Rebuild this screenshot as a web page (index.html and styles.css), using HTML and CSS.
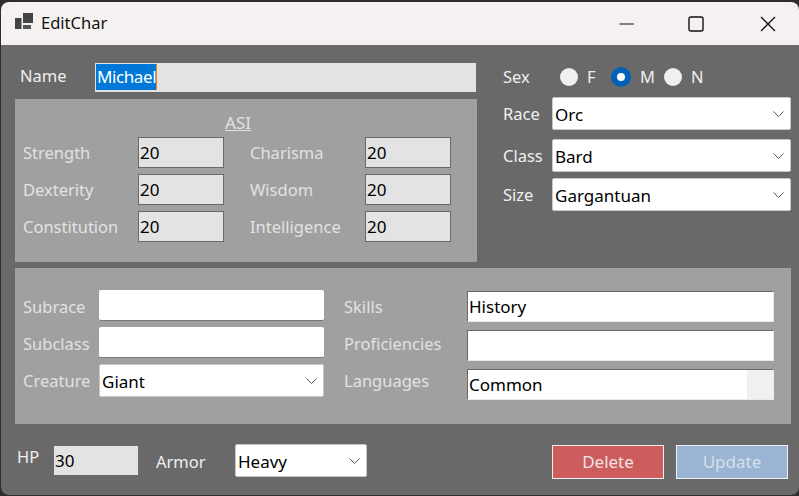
FILE: index.html
```html
<!DOCTYPE html>
<html lang="en">
<head>
    <meta charset="UTF-8">
    <meta name="viewport" content="width=device-width, initial-scale=1.0">
    <title>EditChar</title>
    <link rel="stylesheet" href="styles.css">
</head>
<body>
    <div class="window">
        <!-- Title bar -->
        <div class="titlebar">
            <svg class="app-icon" width="18" height="17" viewBox="0 0 18 17">
                <rect x="0" y="5" width="6.5" height="11" fill="#444"/>
                <rect x="8" y="0" width="10" height="10" fill="#444"/>
                <rect x="8" y="12" width="8" height="4" fill="#555"/>
            </svg>
            <span class="title">EditChar</span>
            <div class="caption-buttons">
                <svg width="16" height="16" viewBox="0 0 16 16"><path d="M1.5 8H16" stroke="#111" stroke-width="1.2"/></svg>
                <svg class="max-button" width="16" height="16" viewBox="0 0 16 16"><rect x="1" y="1" width="14" height="14" rx="2" fill="none" stroke="#111" stroke-width="1.4"/></svg>
                <svg width="16" height="16" viewBox="0 0 16 16"><path d="M1 1L15 15M15 1L1 15" stroke="#111" stroke-width="1.3"/></svg>
            </div>
        </div>

        <div class="client">
            <div class="top">
                <div class="left">
                    <div class="name-row">
                        <label class="name-label">Name</label>
                        <div class="name-field"><span class="selected">Michael</span></div>
                    </div>
                    <div class="panel asi">
                        <div class="asi-title">ASI</div>
                        <div class="asi-grid">
                            <label>Strength</label><input class="stat" type="text" value="20">
                            <label>Charisma</label><input class="stat" type="text" value="20">
                            <label>Dexterity</label><input class="stat" type="text" value="20">
                            <label>Wisdom</label><input class="stat" type="text" value="20">
                            <label>Constitution</label><input class="stat" type="text" value="20">
                            <label>Intelligence</label><input class="stat" type="text" value="20">
                        </div>
                    </div>
                </div>

                <div class="right">
                    <div class="sex-row">
                        <label class="sex-label">Sex</label>
                        <span class="radio"></span><label class="radio-text">F</label>
                        <span class="radio checked"></span><label class="radio-text">M</label>
                        <span class="radio"></span><label class="radio-text">N</label>
                    </div>
                    <div class="form-row race-row">
                        <label>Race</label>
                        <div class="combo"><span>Orc</span><svg width="11" height="6" viewBox="0 0 11 6"><path d="M0.5 0.5L5.5 5.5L10.5 0.5" fill="none" stroke="#555"/></svg></div>
                    </div>
                    <div class="form-row class-row">
                        <label>Class</label>
                        <div class="combo"><span>Bard</span><svg width="11" height="6" viewBox="0 0 11 6"><path d="M0.5 0.5L5.5 5.5L10.5 0.5" fill="none" stroke="#555"/></svg></div>
                    </div>
                    <div class="form-row">
                        <label>Size</label>
                        <div class="combo"><span>Gargantuan</span><svg width="11" height="6" viewBox="0 0 11 6"><path d="M0.5 0.5L5.5 5.5L10.5 0.5" fill="none" stroke="#555"/></svg></div>
                    </div>
                </div>
            </div>

            <div class="panel details">
                <div class="details-left">
                    <div class="detail-row"><label>Subrace</label><input class="plain" type="text"></div>
                    <div class="detail-row"><label>Subclass</label><input class="plain" type="text"></div>
                    <div class="detail-row">
                        <label>Creature</label>
                        <div class="combo"><span>Giant</span><svg width="11" height="6" viewBox="0 0 11 6"><path d="M0.5 0.5L5.5 5.5L10.5 0.5" fill="none" stroke="#555"/></svg></div>
                    </div>
                </div>
                <div class="details-right">
                    <div class="list-row"><label>Skills</label><div class="listbox">History</div></div>
                    <div class="list-row"><label>Proficiencies</label><div class="listbox"></div></div>
                    <div class="list-row"><label>Languages</label><div class="listbox"><span>Common</span><span class="scroll-strip"></span></div></div>
                </div>
            </div>

            <div class="bottom">
                <label class="hp-label">HP</label>
                <input class="hp" type="text" value="30">
                <label class="armor-label">Armor</label>
                <div class="combo armor"><span>Heavy</span><svg width="11" height="6" viewBox="0 0 11 6"><path d="M0.5 0.5L5.5 5.5L10.5 0.5" fill="none" stroke="#555"/></svg></div>
                <button class="btn delete">Delete</button>
                <button class="btn update">Update</button>
            </div>
        </div>
    </div>
</body>
</html>
```

FILE: styles.css
```css
* {
    box-sizing: border-box;
}
html, body {
    margin: 0;
    height: 100%;
    overflow: hidden;
}
body {
    background-color: #2e2e2e;
    font-family: "Noto Sans", "Open Sans", sans-serif;
    font-size: 17px;
    color: #000;
}
label {
    color: #efefef;
    font-size: 16.5px;
    line-height: 22px;
}
input {
    font-family: inherit;
    font-size: 17px;
    outline: none;
}
.window {
    width: 798px;
    height: 493px;
    margin: 2px 0 0 1px;
    border-radius: 8px;
    overflow: hidden;
    display: flex;
    flex-direction: column;
}
.titlebar {
    height: 43px;
    background-color: #f5f1f0;
    display: flex;
    align-items: center;
    padding-left: 14px;
}
.app-icon {
    margin-right: 8px;
    margin-top: -4px;
}
.title {
    font-size: 16.5px;
    color: #111;
    margin-top: -2px;
}
.caption-buttons {
    margin-left: auto;
    display: flex;
    gap: 55px;
    padding-right: 23px;
}
.max-button {
    margin-left: -1px;
    margin-right: 1px;
}
.client {
    flex: 1;
    background-color: #696969;
}
.top {
    display: flex;
    height: 223px;
    padding-left: 14px;
}
.left {
    width: 462px;
    padding-top: 18px;
}
.name-row {
    display: flex;
    align-items: center;
    height: 29px;
}
.name-label {
    width: 80px;
    padding-left: 5px;
    margin-top: -3px;
}
.name-field {
    flex: 1;
    height: 29px;
    background-color: #e3e3e3;
    padding: 1px;
    margin-right: 1px;
}
.selected {
    display: inline-block;
    height: 26px;
    width: 61px;
    line-height: 26px;
    background-color: #0078d7;
    color: #fff;
    padding-left: 1px;
    letter-spacing: -0.4px;
    border-right: 1px solid #f08020;
}
.panel {
    background-color: #a0a0a0;
}
.panel label {
    color: #e2e2e2;
}
.asi {
    height: 163px;
    margin-top: 7px;
    padding-left: 8px;
}
.asi-title {
    width: 430px;
    text-align: center;
    color: #e2e2e2;
    text-decoration: underline;
    line-height: 22px;
    padding-top: 13px;
    height: 38px;
}
.asi-grid {
    display: grid;
    grid-template-columns: 115px 86px 141px 86px;
    grid-auto-rows: 31px;
    row-gap: 6px;
    align-items: center;
}
.asi-grid label:nth-child(4n + 3) {
    padding-left: 26px;
}
.stat {
    width: 86px;
    height: 31px;
    background-color: #e3e3e3;
    border: 1px solid #696969;
    padding: 0 1px;
}
.right {
    flex: 1;
    padding-left: 26px;
    padding-top: 21px;
}
.sex-row {
    display: flex;
    align-items: center;
    height: 22px;
}
.sex-label {
    width: 57px;
}
.radio {
    width: 18px;
    height: 18px;
    border-radius: 50%;
    background-color: #f0f0f0;
}
.radio.checked {
    width: 20px;
    height: 20px;
    border: 6px solid #0060b8;
    background-color: #fff;
}
.radio-text {
    width: 33px;
    padding-left: 9px;
}
.form-row {
    display: flex;
    align-items: center;
    margin-top: 6px;
    width: 288px;
}
.race-row {
    margin-top: 9px;
}
.class-row {
    margin-top: 9px;
}
.form-row label {
    width: 49px;
    margin-top: 0;
}
.combo {
    flex: 1;
    height: 33px;
    background-color: #fff;
    border: 1px solid #c8c8c8;
    border-radius: 2px;
    display: flex;
    align-items: center;
    justify-content: space-between;
    padding: 1px 6px 0 2px;
    color: #000;
}
.form-row .combo {
    flex: none;
    width: 239px;
}
.details {
    display: flex;
    height: 156px;
    width: 776px;
    margin-left: 14px;
}
.details-left {
    width: 309px;
    padding-top: 22px;
    padding-left: 8px;
}
.detail-row {
    display: flex;
    align-items: center;
    height: 31px;
    margin-bottom: 6px;
}
.detail-row label {
    width: 76px;
    flex: none;
    margin-top: 2px;
}
.plain {
    width: 225px;
    height: 31px;
    background-color: #fff;
    border: none;
    border-bottom: 1px solid #777;
    border-radius: 2px;
}
.detail-row .combo {
    flex: none;
    width: 225px;
    height: 33px;
    margin-top: 2px;
}
.details-right {
    padding-left: 20px;
    padding-top: 23px;
}
.list-row {
    display: flex;
    height: 31px;
    margin-bottom: 8px;
}
.list-row label {
    width: 123px;
    padding-top: 5px;
}
.list-row:nth-child(2) label {
    padding-top: 3px;
}
.list-row:nth-child(3) label {
    padding-top: 1px;
}
.listbox {
    width: 307px;
    height: 31px;
    background-color: #fff;
    border: 1px solid;
    border-color: #696969 #e8e8e8 #e8e8e8 #696969;
    line-height: 29px;
    padding-left: 1px;
    display: flex;
    justify-content: space-between;
}
.scroll-strip {
    width: 26px;
    background-color: #f0f0f0;
}
.bottom {
    display: flex;
    align-items: center;
    height: 71px;
    padding-left: 16px;
    padding-top: 2px;
}
.hp-label {
    width: 37px;
    margin-top: -7px;
}
.hp {
    width: 84px;
    height: 29px;
    border: none;
    background-color: #e3e3e3;
    padding: 0 1px;
}
.armor-label {
    width: 79px;
    margin-left: 18px;
    margin-top: 2px;
}
.armor {
    flex: none;
    width: 132px;
}
.btn {
    width: 112px;
    height: 34px;
    margin-top: 2px;
    border: 1px solid #f0f0f0;
    font-family: inherit;
    font-size: 17px;
}
.delete {
    margin-left: 185px;
    background-color: #cd5c5c;
    color: #f0e4e4;
}
.update {
    margin-left: 12px;
    background-color: #9ab4d3;
    color: #d5dfea;
}
```
